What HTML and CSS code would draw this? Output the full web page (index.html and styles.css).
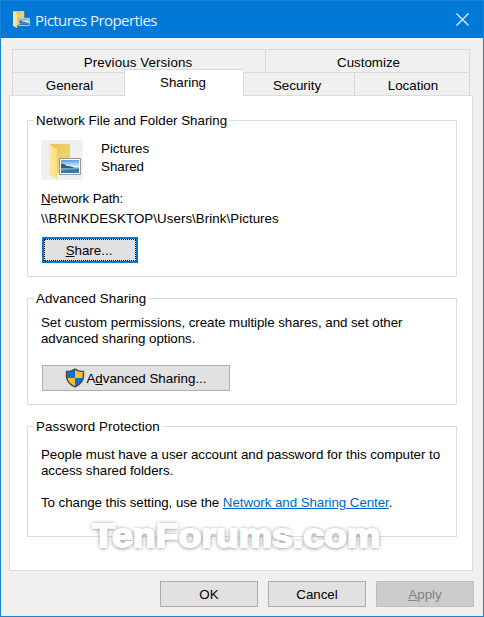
FILE: index.html
```html
<!DOCTYPE html>
<html lang="en">
<head>
<meta charset="utf-8">
<title>Pictures Properties</title>
<link rel="stylesheet" href="styles.css">
</head>
<body>
<svg width="0" height="0" class="defs" aria-hidden="true">
  <defs>
    <linearGradient id="back" x1="0" y1="0" x2="1" y2="1"><stop offset="0" stop-color="#e9c35b"/><stop offset="1" stop-color="#f8da83"/></linearGradient>
    <linearGradient id="front" x1="0" y1="0" x2="1" y2="0"><stop offset="0" stop-color="#ffeaa4"/><stop offset="1" stop-color="#fbdc85"/></linearGradient>
    <linearGradient id="sky" x1="0" y1="0" x2="0" y2="1"><stop offset="0" stop-color="#5797e8"/><stop offset=".5" stop-color="#d8f3fc"/><stop offset=".65" stop-color="#75a9b9"/><stop offset="1" stop-color="#3f86b8"/></linearGradient>
    <symbol id="folder" viewBox="0 0 32 35">
      <path d="M1 0h20v29H8z" fill="url(#back)"/>
      <path d="M0 0l8 5v30L0 31z" fill="url(#front)"/>
      <path d="M10.500 14.500h21v16h-21z" fill="#fff" stroke="#969696"/>
      <path d="M12 16h18v13H12z" fill="url(#sky)"/>
      <path d="M12 20c3-1 4 1 6 2 4 0 5 1 8 2H12z" fill="#315f64"/>
      <path d="M12 27c5-2 10-1 18-2v4H12z" fill="#3c779f"/>
    </symbol>
  </defs>
</svg>
<div class="window">
  <header class="titlebar">
    <svg class="title-icon" width="17" height="17" viewBox="0 0 32 35" preserveAspectRatio="none"><use href="#folder" width="32" height="35"/></svg>
    <h1 class="title">Pictures Properties</h1>
    <svg class="close" width="13" height="13" viewBox="0 0 13 13"><path d="M.5.5l12 12M12.500.5l-12 12" stroke="#fff" stroke-width="1.100"/></svg>
  </header>
  <nav class="tabs">
    <div class="tab-row tab-row-back">
      <span class="tab"><span class="t t-back">Previous Versions</span></span>
      <span class="tab"><span class="t t-right">Customize</span></span>
    </div>
    <div class="tab-row tab-row-front">
      <span class="tab"><span class="t t-right">General</span></span>
      <span class="tab tab-active"><span class="t">Sharing</span></span>
      <span class="tab"><span class="t t-left">Security</span></span>
      <span class="tab"><span class="t t-right">Location</span></span>
    </div>
  </nav>
  <main class="panel">
    <section class="group group-network">
      <h2 class="legend"><span class="t">Network File and Folder Sharing</span></h2>
      <div class="item">
        <div class="thumb"><svg width="32" height="35"><use href="#folder" width="32" height="35"/></svg></div>
        <div class="item-text"><span class="t">Pictures</span><br><span class="t">Shared</span></div>
      </div>
      <p class="path-label"><span class="t"><u>N</u>etwork Path:</span></p>
      <p class="path"><span class="t">\\BRINKDESKTOP\Users\Brink\Pictures</span></p>
      <button class="button share"><span class="t"><u>S</u>hare...</span></button>
    </section>
    <section class="group group-advanced">
      <h2 class="legend"><span class="t">Advanced Sharing</span></h2>
      <p class="text"><span class="t">Set custom permissions, create multiple shares, and set other</span><br><span class="t">advanced sharing options.</span></p>
      <button class="button advanced">
        <svg width="20" height="20" viewBox="0 0 20 20"><path d="M10 .3C7.500 2.200 4 3 .8 2.800V8c0 5.500 4.200 9.400 9.200 11.800C15 17.400 19.200 13.500 19.200 8V2.800C16 3 12.500 2.200 10 .3z" fill="#4b4b4b"/><path d="M10 2V10H2.400L2.200 4C5 4 8 3.500 10 2z" fill="#0a70cf"/><path d="M10 2V10h7.600l.2-6C15 4 12 3.500 10 2z" fill="#ffbd37"/><path d="M10 10v8.200C6 16.200 3.200 13.800 2.400 10z" fill="#ffbd37"/><path d="M10 10v8.200c4-2 6.800-4.400 7.600-8.200z" fill="#0a70cf"/></svg>
        <span class="t">A<u>d</u>vanced Sharing...</span>
      </button>
    </section>
    <section class="group group-password">
      <h2 class="legend"><span class="t">Password Protection</span></h2>
      <p class="text"><span class="t">People must have a user account and password for this computer to</span><br><span class="t">access shared folders.</span></p>
      <p class="text text-setting"><span class="t">To change this setting, use the <a class="link">Network and Sharing Center</a>.</span></p>
      <div class="watermark">TenForums.com</div>
    </section>
  </main>
  <footer class="actions">
    <button class="button"><span class="t">OK</span></button>
    <button class="button"><span class="t">Cancel</span></button>
    <button class="button" disabled><span class="t"><u>A</u>pply</span></button>
  </footer>
</div>
</body>
</html>
```
FILE: styles.css
```css
* { box-sizing: border-box; }
body { margin: 0; font: 13.333px/16px "Liberation Sans", Arial, sans-serif; color: #000; }
h1, h2, p { margin: 0; font-weight: normal; }
.defs { position: absolute; }
.t { white-space: nowrap; }
.window { width: 484px; height: 617px; background: #f0f0f0; border: 1px solid #1883d7; }
.titlebar { height: 37px; background: #0078d7; display: flex; align-items: center; padding: 0 14px 0 12px; }
.title { flex: 1; margin-left: 5px; color: #e8f3fc; font: 15px/20px "Open Sans", "Noto Sans", sans-serif; letter-spacing: -.57px; }
.close { display: block; }
.tabs { margin: 11px 0 0 11px; width: 458px; }
.tab-row { display: grid; }
.tab-row-back { grid-template-columns: 253px 205px; height: 23px; }
.tab-row-front { grid-template-columns: 112px 119px 111px 116px; height: 23px; }
.tab { display: flex; align-items: center; justify-content: center; border: solid #d9d9d9; border-width: 1px 0 0 1px; padding-top: 3px; }
.tab:last-child { border-right-width: 1px; }
.tab-active { background: #fff; margin-top: -3px; margin-bottom: -1px; position: relative; padding: 2px 2px 2px 0; }
.t-right { padding-left: 2px; }
.t-left { padding-right: 4px; }
.t-back { padding-right: 2px; letter-spacing: .1px; }
.panel { width: 464px; height: 476px; margin-left: 8px; border: 1px solid #dcdcdc; background: #fff; padding: 24px 0 0 17px; }
.group { width: 430px; border: 1px solid #dcdcdc; padding: 0 0 0 13px; margin-bottom: 21px; }
.group-network { height: 157px; }
.group-advanced { height: 107px; }
.group-password { height: 111px; }
.legend { width: max-content; margin: -8px 0 0 -7px; padding: 0 2px; background: #fff; font-size: inherit; }
.group-advanced .legend, .group-password .legend { letter-spacing: .08px; }
.item { display: flex; gap: 18px; margin-top: 11px; }
.thumb { width: 42px; height: 40px; background: #f0f0f0; padding: 4px 0 0 8px; }
.item-text { line-height: 18px; }
.path-label { margin-top: 11px; letter-spacing: -.12px; }
.path { margin-top: 4px; letter-spacing: .05px; }
.button { display: flex; align-items: center; justify-content: center; width: 98px; height: 26px; padding: 1px 0 0; border: 1px solid #adadad; background: #e1e1e1; color: #000; font: inherit; }
.button:disabled { background: #ccc; border-color: #bfbfbf; color: #838383; }
.share { width: 96px; border: 2px solid #0078d7; outline: 1px dotted #000; outline-offset: -3px; margin: 10px 0 0 1px; }
.share .t { padding-right: 2px; }
.advanced { width: 188px; margin: 18px 0 0 1px; gap: 1px; }
.advanced svg { margin-top: -2px; }
.text { margin-top: 8px; letter-spacing: -.05px; }
.group-password .text { margin-top: 12px; }
.group-password .text-setting { margin-top: 16px; letter-spacing: -.06px; }
.link { color: #0066cc; text-decoration: underline; }
.watermark { width: max-content; margin: 5px 0 0 51px; color: #fff; font: bold 34px/38px "Liberation Sans", Arial, sans-serif; -webkit-text-stroke: 2px #fff; text-shadow: 0 1px 4px #888, 0 0 4px #999; transform: scaleX(1.1); transform-origin: left; }
.actions { display: flex; gap: 10px; justify-content: flex-end; margin: 10px 9px 0 0; }
```
